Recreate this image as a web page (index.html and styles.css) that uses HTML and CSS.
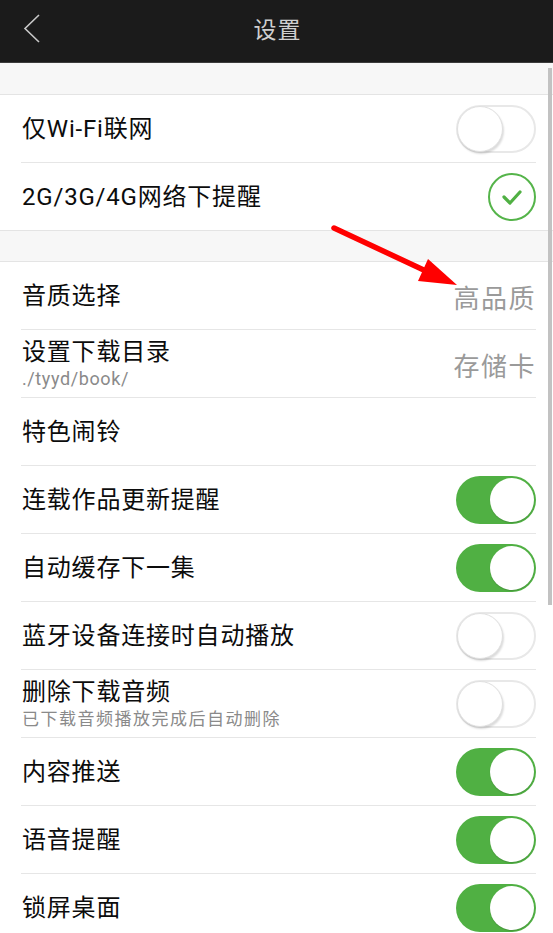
FILE: index.html
```html
<!DOCTYPE html>
<html lang="zh-CN">
<head>
<meta charset="utf-8">
<title>设置</title>
<link rel="stylesheet" href="styles.css">
</head>
<body>
<div class="page">
  <header class="topbar">
    <svg class="back" width="20" height="32" viewBox="0 0 20 32"><polyline points="16,2 2,15.5 16,29" fill="none" stroke="#c8c8c8" stroke-width="1.6"/></svg>
    <h1 class="title">设置</h1>
  </header>

  <div class="gap"></div>
  <section class="group">
    <div class="row">
      <div class="label"><span class="name">仅Wi-Fi联网</span></div>
      <span class="toggle off"><span class="knob"></span></span>
    </div>
    <div class="row last">
      <div class="label"><span class="name">2G/3G/4G网络下提醒</span></div>
      <span class="check">
        <svg width="26" height="22" viewBox="0 0 26 22"><polyline points="5,11 11,17 21,6" fill="none" stroke="#50b043" stroke-width="3.2" stroke-linecap="round" stroke-linejoin="round"/></svg>
      </span>
    </div>
  </section>

  <div class="gap mid"></div>
  <section class="group">
    <div class="row">
      <div class="label"><span class="name">音质选择</span></div>
      <span class="value">高品质</span>
    </div>
    <div class="row">
      <div class="label"><span class="name">设置下载目录</span><span class="sub latin">./tyyd/book/</span></div>
      <span class="value">存储卡</span>
    </div>
    <div class="row">
      <div class="label"><span class="name">特色闹铃</span></div>
    </div>
    <div class="row">
      <div class="label"><span class="name">连载作品更新提醒</span></div>
      <span class="toggle on"><span class="knob"></span></span>
    </div>
    <div class="row">
      <div class="label"><span class="name">自动缓存下一集</span></div>
      <span class="toggle on"><span class="knob"></span></span>
    </div>
    <div class="row">
      <div class="label"><span class="name">蓝牙设备连接时自动播放</span></div>
      <span class="toggle off"><span class="knob"></span></span>
    </div>
    <div class="row">
      <div class="label"><span class="name">删除下载音频</span><span class="sub">已下载音频播放完成后自动删除</span></div>
      <span class="toggle off"><span class="knob"></span></span>
    </div>
    <div class="row">
      <div class="label"><span class="name">内容推送</span></div>
      <span class="toggle on"><span class="knob"></span></span>
    </div>
    <div class="row">
      <div class="label"><span class="name">语音提醒</span></div>
      <span class="toggle on"><span class="knob"></span></span>
    </div>
    <div class="row">
      <div class="label"><span class="name">锁屏桌面</span></div>
      <span class="toggle on"><span class="knob"></span></span>
    </div>
  </section>

  <div class="scrollbar"></div>
  <svg class="arrow" width="553" height="933" viewBox="0 0 553 933">
    <line x1="334" y1="228" x2="428" y2="272" stroke="#ff0000" stroke-width="5.5" stroke-linecap="round"/>
    <polygon points="457,285 418,281 428,259" fill="#ff0000"/>
  </svg>
</div>
</body>
</html>
```

FILE: styles.css
```css
* { box-sizing: border-box; }
html, body { margin: 0; padding: 0; }
body {
  width: 553px;
  height: 933px;
  overflow: hidden;
  background: #ffffff;
  font-family: Roboto, "Noto Sans CJK SC", sans-serif;
  color: #111111;
}
.page { position: relative; width: 553px; height: 933px; overflow: hidden; }

.topbar {
  height: 63px;
  background: #1b1b1b;
  border-bottom: 1px solid #3c3c3c;
  display: flex;
  align-items: center;
  justify-content: center;
  position: relative;
}
.back { position: absolute; left: 23px; top: 13px; }
.title {
  margin: 0;
  font-weight: normal;
  font-size: 23px;
  color: #cfcfcf;
  letter-spacing: 1px;
  padding-bottom: 6px;
  padding-left: 2px;
}

.gap {
  height: 32px;
  background: #f7f7f7;
  border-bottom: 1px solid #e4e4e4;
}
.gap.mid { border-top: 1px solid #e4e4e4; }

.group { background: #fff; }
.row {
  height: 68px;
  display: flex;
  align-items: center;
  justify-content: space-between;
  padding: 0 17px 0 22px;
  position: relative;
}
.row::after {
  content: "";
  position: absolute;
  left: 21px;
  right: 17px;
  bottom: 0;
  height: 1px;
  background: #e6e6e6;
}
.row.last::after { display: none; }
.row.last { height: 67px; }

.label { display: flex; flex-direction: column; }
.name {
  font-size: 24px;
  letter-spacing: 0.8px;
  line-height: 30px;
  color: #0c0c0c;
}
.sub {
  font-size: 17px;
  letter-spacing: 1.5px;
  line-height: 24px;
  color: #8a8a8a;
}
.sub.latin { font-size: 18px; letter-spacing: 0.6px; }

.value {
  font-size: 26px;
  color: #9a9a9a;
  letter-spacing: 1.5px;
  margin-right: 0;
}

.toggle {
  width: 80px;
  height: 48px;
  border-radius: 24px;
  position: relative;
  flex: none;
}
.toggle.on { background: #50b043; }
.toggle.on .knob {
  position: absolute;
  right: 2px;
  top: 2px;
  width: 44px;
  height: 44px;
  border-radius: 50%;
  background: #fff;
  box-shadow: 0 1px 1px rgba(0,0,0,0.15);
}
.toggle.off {
  background: #fff;
  border: 2px solid #e8e8e8;
}
.toggle.off .knob {
  position: absolute;
  left: -1px;
  top: -1px;
  width: 46px;
  height: 46px;
  border-radius: 50%;
  background: #fff;
  border: 1px solid #e0e0e0;
  box-shadow: 1px 2px 2px rgba(0,0,0,0.14);
}

.check {
  width: 48px;
  height: 48px;
  border-radius: 50%;
  border: 2px solid #55b44a;
  display: flex;
  align-items: center;
  justify-content: center;
  flex: none;
}

.scrollbar {
  position: absolute;
  left: 548px;
  top: 68px;
  width: 4px;
  height: 537px;
  background: #c2c2c2;
}
.arrow { position: absolute; left: 0; top: 0; pointer-events: none; }
```
